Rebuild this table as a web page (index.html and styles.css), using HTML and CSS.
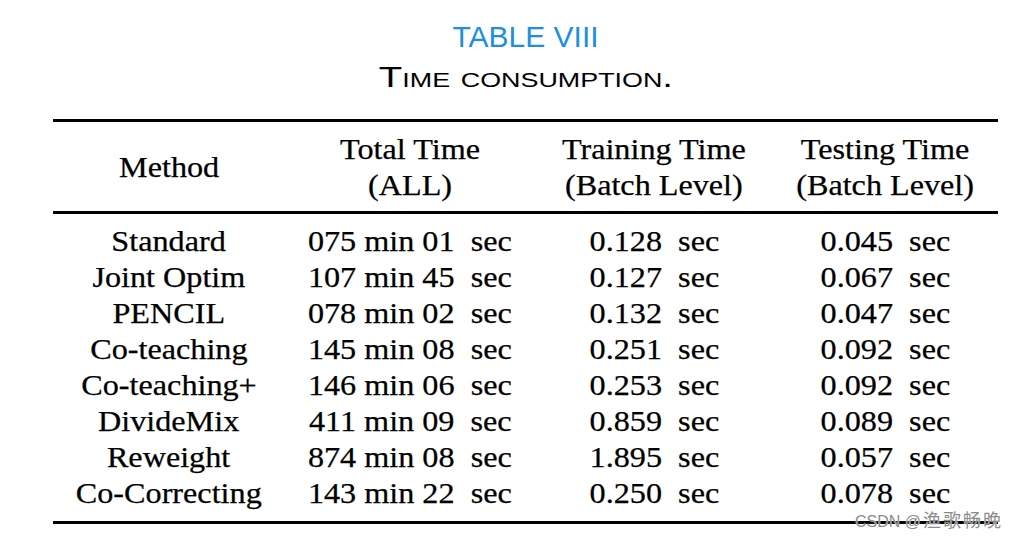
FILE: index.html
```html
<!DOCTYPE html>
<html>
<head>
<meta charset="utf-8">
<link rel="stylesheet" href="styles.css">
</head>
<body>
<div class="page">
  <div class="caption">
    <div class="cap-num">TABLE VIII</div>
    <div class="cap-title"><span class="wide">Time consumption.</span></div>
  </div>
  <table class="tbl">
    <colgroup>
      <col class="c1"><col class="c2"><col class="c3"><col class="c4">
    </colgroup>
    <thead>
      <tr>
        <th><span class="s">Method</span></th>
        <th><span class="s">Total Time<br>(ALL)</span></th>
        <th><span class="s">Training Time<br>(Batch Level)</span></th>
        <th><span class="s">Testing Time<br>(Batch Level)</span></th>
      </tr>
    </thead>
    <tbody>
      <tr><td><span class="s">Standard</span></td><td><span class="s">075 min 01&nbsp; sec</span></td><td><span class="s">0.128&nbsp; sec</span></td><td><span class="s">0.045&nbsp; sec</span></td></tr>
      <tr><td><span class="s">Joint Optim</span></td><td><span class="s">107 min 45&nbsp; sec</span></td><td><span class="s">0.127&nbsp; sec</span></td><td><span class="s">0.067&nbsp; sec</span></td></tr>
      <tr><td><span class="s">PENCIL</span></td><td><span class="s">078 min 02&nbsp; sec</span></td><td><span class="s">0.132&nbsp; sec</span></td><td><span class="s">0.047&nbsp; sec</span></td></tr>
      <tr><td><span class="s">Co-teaching</span></td><td><span class="s">145 min 08&nbsp; sec</span></td><td><span class="s">0.251&nbsp; sec</span></td><td><span class="s">0.092&nbsp; sec</span></td></tr>
      <tr><td><span class="s">Co-teaching+</span></td><td><span class="s">146 min 06&nbsp; sec</span></td><td><span class="s">0.253&nbsp; sec</span></td><td><span class="s">0.092&nbsp; sec</span></td></tr>
      <tr><td><span class="s">DivideMix</span></td><td><span class="s">411 min 09&nbsp; sec</span></td><td><span class="s">0.859&nbsp; sec</span></td><td><span class="s">0.089&nbsp; sec</span></td></tr>
      <tr><td><span class="s">Reweight</span></td><td><span class="s">874 min 08&nbsp; sec</span></td><td><span class="s">1.895&nbsp; sec</span></td><td><span class="s">0.057&nbsp; sec</span></td></tr>
      <tr><td><span class="s">Co-Correcting</span></td><td><span class="s">143 min 22&nbsp; sec</span></td><td><span class="s">0.250&nbsp; sec</span></td><td><span class="s">0.078&nbsp; sec</span></td></tr>
    </tbody>
  </table>
  <div class="watermark"><span class="wm-latin">CSDN @</span><span class="wm-cjk">渔歌畅晚</span></div>
</div>
</body>
</html>
```

FILE: styles.css
```css
html, body {
  margin: 0;
  padding: 0;
  background: #ffffff;
}

.page {
  position: relative;
  width: 1022px;
  height: 539px;
  overflow: hidden;
}

.caption {
  padding-top: 19px;
  padding-left: 53px;
  width: 945px;
  text-align: center;
  font-family: "Liberation Sans", Arial, sans-serif;
  font-size: 30px;
  line-height: 36px;
}

.cap-num {
  color: #1d8fe0;
}

.cap-title {
  margin-top: 4px;
  color: #000;
}

.wide {
  display: inline-block;
  font-variant: small-caps;
  transform: scaleX(1.28);
}

.tbl {
  margin: 24px 0 0 53px;
  width: 945px;
  table-layout: fixed;
  border-collapse: collapse;
  font-family: "Liberation Serif", "Times New Roman", serif;
  font-size: 29px;
  line-height: 36px;
  color: #000;
  -webkit-text-stroke: 0.25px #000;
}

.c1 { width: 232px; }
.c2 { width: 250px; }
.c3 { width: 238px; }
.c4 { width: 225px; }

.tbl thead tr {
  border-top: 3px solid #000;
  border-bottom: 3px solid #000;
}

.tbl th {
  font-weight: normal;
  text-align: center;
  vertical-align: middle;
  padding: 9px 0 8px;
}

.tbl td {
  text-align: center;
  padding: 0;
  white-space: nowrap;
}

.tbl tbody tr:first-child td {
  padding-top: 9px;
}

.tbl tbody tr:last-child td {
  padding-bottom: 10px;
}

.tbl tbody {
  border-bottom: 3px solid #000;
}

.s {
  display: inline-block;
  transform: scaleX(1.11);
  white-space: nowrap;
}

.watermark {
  position: absolute;
  left: 855px;
  top: 506px;
  color: #8c8c8c;
  white-space: nowrap;
  text-shadow: 0 0 1px #fff;
}

.wm-latin {
  font-family: "Liberation Sans", Arial, sans-serif;
  font-size: 16px;
}

.wm-cjk {
  font-family: "Noto Sans CJK SC", sans-serif;
  font-size: 18px;
  letter-spacing: 2px;
  margin-left: 2px;
}
```
